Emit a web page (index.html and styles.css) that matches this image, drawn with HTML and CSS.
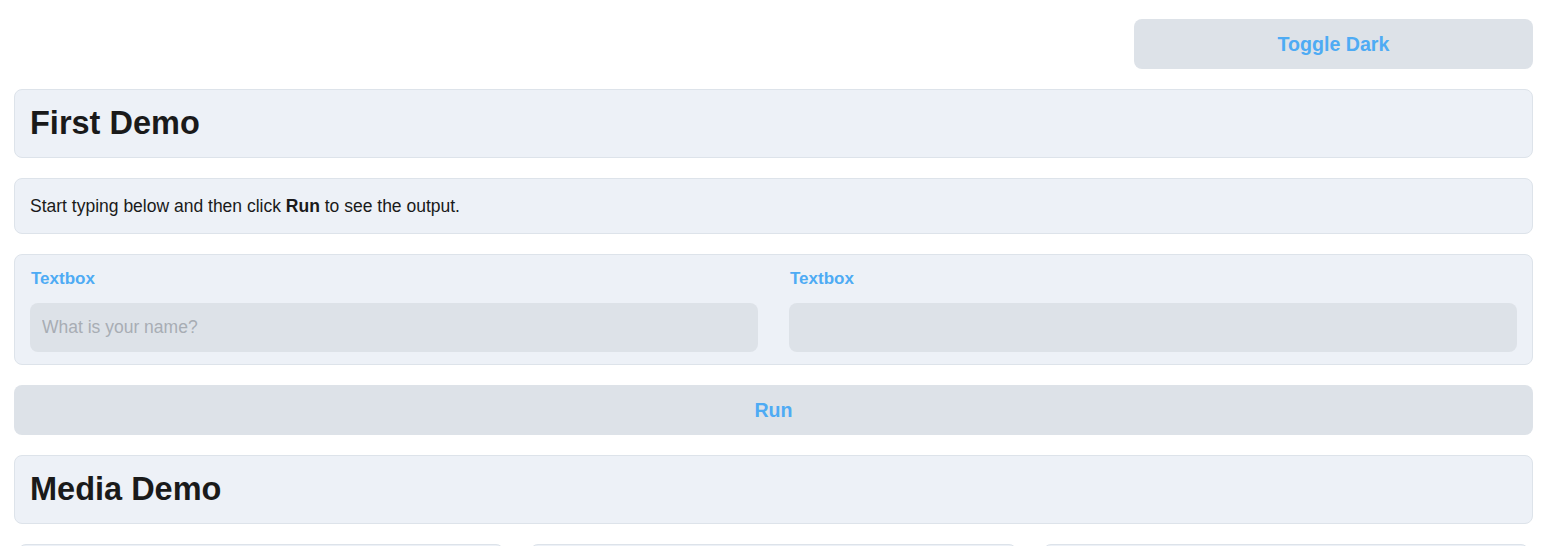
FILE: index.html
```html
<!DOCTYPE html>
<html>
<head>
<meta charset="utf-8">
<link rel="stylesheet" href="styles.css">
</head>
<body>
<div class="page">
  <div class="topbar">
    <button class="btn toggle">Toggle Dark</button>
  </div>
  <div class="panel heading"><h1>First Demo</h1></div>
  <div class="panel md"><p>Start typing below and then click <strong>Run</strong> to see the output.</p></div>
  <div class="panel row">
    <div class="field">
      <label>Textbox</label>
      <input type="text" placeholder="What is your name?">
    </div>
    <div class="field">
      <label>Textbox</label>
      <input type="text">
    </div>
  </div>
  <button class="btn run">Run</button>
  <div class="panel heading"><h1>Media Demo</h1></div>
  <div class="cards">
    <div class="card"></div>
    <div class="card"></div>
    <div class="card"></div>
  </div>
</div>
</body>
</html>
```
FILE: styles.css
```css
html, body {
  margin: 0;
  padding: 0;
  background: #ffffff;
  font-family: "Liberation Sans", Arial, sans-serif;
  color: #1a1a1a;
  overflow: hidden;
}
.page {
  display: flex;
  flex-direction: column;
  gap: 20px;
  padding: 19px 13px 0 14px;
}
.topbar {
  display: flex;
  justify-content: flex-end;
}
.btn {
  font-family: "Liberation Sans", Arial, sans-serif;
  font-weight: bold;
  font-size: 19.6px;
  color: #4eabf4;
  background: #dde2e8;
  border: none;
  border-radius: 8px;
  height: 50px;
  padding: 0;
  cursor: pointer;
}
.toggle {
  width: 399px;
}
.run {
  width: 100%;
}
.panel {
  background: #edf1f7;
  border: 1px solid #dde3ea;
  border-radius: 8px;
  box-sizing: border-box;
}
.heading {
  height: 69px;
  display: flex;
  align-items: center;
  padding: 0 15px;
}
.heading h1 {
  margin: 0;
  font-size: 32.5px;
  font-weight: bold;
  color: #1a1a1a;
}
.md {
  height: 56px;
  display: flex;
  align-items: center;
  padding: 0 15px;
}
.md p {
  margin: 0;
  font-size: 17.5px;
}
.md strong {
  font-weight: bold;
}
.row {
  display: grid;
  grid-template-columns: 1fr 1fr;
  column-gap: 31px;
  padding: 14px 15px 12px 15px;
}
.field {
  display: flex;
  flex-direction: column;
  gap: 14px;
}
.field label {
  font-weight: bold;
  font-size: 17px;
  line-height: 20px;
  color: #4eabf4;
  padding-left: 1px;
}
.field input {
  height: 49px;
  box-sizing: border-box;
  border: none;
  border-radius: 8px;
  background: #dde2e8;
  font-family: "Liberation Sans", Arial, sans-serif;
  font-size: 17.5px;
  padding: 0 12px;
  color: #1a1a1a;
  outline: none;
}
.field input::placeholder {
  color: #a8adb4;
}
.cards {
  display: grid;
  grid-template-columns: repeat(3, 1fr);
  column-gap: 26px;
  padding: 0 4px;
}
.card {
  height: 60px;
  background: #edf1f7;
  border: 1px solid #dde3ea;
  border-radius: 8px;
}
```
